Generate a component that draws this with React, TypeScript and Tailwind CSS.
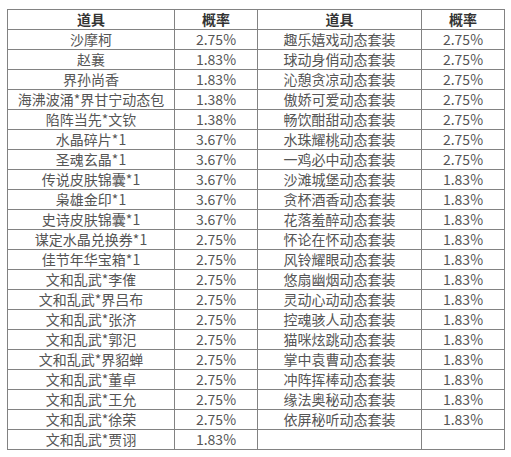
import React from "react";

const left: [string, string][] = [
  ["沙摩柯", "2.75%"],
  ["赵襄", "1.83%"],
  ["界孙尚香", "1.83%"],
  ["海沸波涌*界甘宁动态包", "1.38%"],
  ["陷阵当先*文钦", "1.38%"],
  ["水晶碎片*1", "3.67%"],
  ["圣魂玄晶*1", "3.67%"],
  ["传说皮肤锦囊*1", "3.67%"],
  ["枭雄金印*1", "3.67%"],
  ["史诗皮肤锦囊*1", "3.67%"],
  ["谋定水晶兑换券*1", "2.75%"],
  ["佳节年华宝箱*1", "2.75%"],
  ["文和乱武*李傕", "2.75%"],
  ["文和乱武*界吕布", "2.75%"],
  ["文和乱武*张济", "2.75%"],
  ["文和乱武*郭汜", "2.75%"],
  ["文和乱武*界貂蝉", "2.75%"],
  ["文和乱武*董卓", "2.75%"],
  ["文和乱武*王允", "2.75%"],
  ["文和乱武*徐荣", "2.75%"],
  ["文和乱武*贾诩", "1.83%"],
];

const right: [string, string][] = [
  ["趣乐嬉戏动态套装", "2.75%"],
  ["球动身俏动态套装", "2.75%"],
  ["沁憩贪凉动态套装", "2.75%"],
  ["傲娇可爱动态套装", "2.75%"],
  ["畅饮酣甜动态套装", "2.75%"],
  ["水珠耀桃动态套装", "2.75%"],
  ["一鸡必中动态套装", "2.75%"],
  ["沙滩城堡动态套装", "1.83%"],
  ["贪杯酒香动态套装", "1.83%"],
  ["花落羞醉动态套装", "1.83%"],
  ["怀论在怀动态套装", "1.83%"],
  ["风铃耀眼动态套装", "1.83%"],
  ["悠扇幽烟动态套装", "1.83%"],
  ["灵动心动动态套装", "1.83%"],
  ["控魂骇人动态套装", "1.83%"],
  ["猫咪炫跳动态套装", "1.83%"],
  ["掌中袁曹动态套装", "1.83%"],
  ["冲阵挥棒动态套装", "1.83%"],
  ["缘法奥秘动态套装", "1.83%"],
  ["依屏秘听动态套装", "1.83%"],
  ["", ""],
];

const cell =
  "bg-white h-[19px] flex items-center justify-center text-[14px] leading-[19px] text-[#555] whitespace-nowrap overflow-hidden";
const head =
  "bg-white h-[19px] flex items-center justify-center text-[14px] leading-[19px] text-[#333] font-bold whitespace-nowrap";

export default function App() {
  return (
    <div
      className="w-[511px] h-[457px] bg-white pt-[9px] pl-[7px]"
      style={{ fontFamily: '"Microsoft YaHei", "Noto Sans CJK SC", "Noto Sans", sans-serif' }}
    >
      <div className="grid grid-cols-[166px_82px_163px_82px] gap-px bg-[#828282] border border-[#828282] w-[498px]">
        <div className={head}>道具</div>
        <div className={head}>概率</div>
        <div className={head}>道具</div>
        <div className={head}>概率</div>
        {left.map((l, i) => (
          <React.Fragment key={i}>
            <div className={cell}>{l[0]}</div>
            <div className={cell}>{l[1]}</div>
            <div className={cell}>{right[i][0]}</div>
            <div className={cell}>{right[i][1]}</div>
          </React.Fragment>
        ))}
      </div>
    </div>
  );
}
